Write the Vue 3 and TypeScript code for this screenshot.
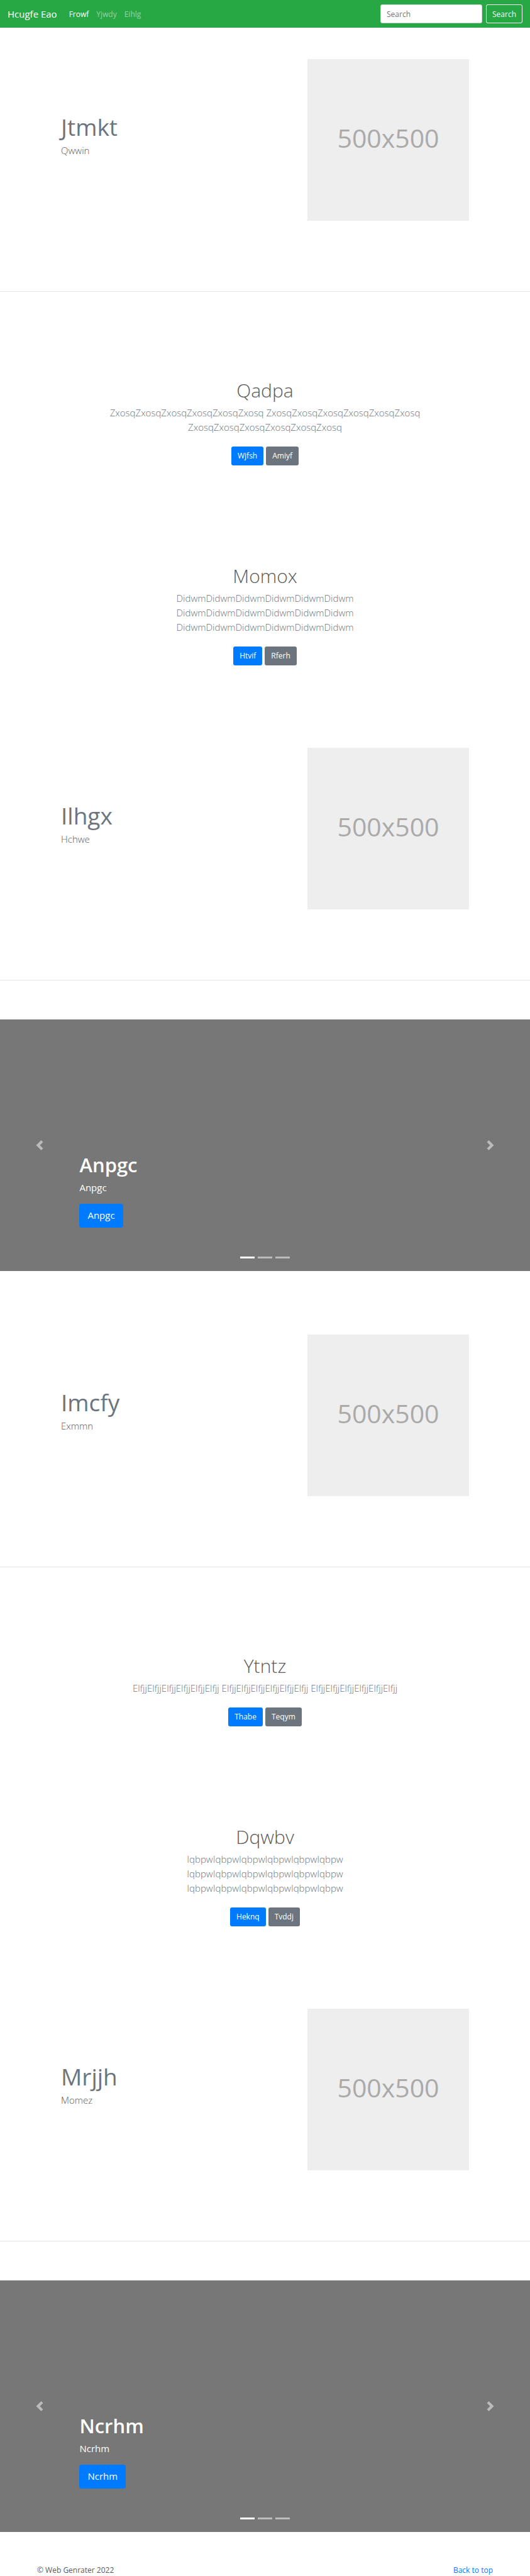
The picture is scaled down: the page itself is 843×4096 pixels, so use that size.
<script setup lang="ts">
interface Feature {
  title: string
  text: string
}

interface Promo {
  title: string
  lines: string
  primary: string
  secondary: string
}

interface Block {
  id: string
  intro: Feature
  promos: Promo[]
  outro: Feature
  slide: string
}

const links: string[] = ['Frowf', 'Yjwdy', 'Eihlg']

const words = (word: string): string => Array(3).fill(word.repeat(6)).join(' ')

const blocks: Block[] = [
  {
    id: 'first',
    intro: { title: 'Jtmkt', text: 'Qwwin' },
    promos: [
      { title: 'Qadpa', lines: words('Zxosq'), primary: 'Wjfsh', secondary: 'Amiyf' },
      { title: 'Momox', lines: words('Didwm'), primary: 'Htvif', secondary: 'Rferh' },
    ],
    outro: { title: 'Ilhgx', text: 'Hchwe' },
    slide: 'Anpgc',
  },
  {
    id: 'second',
    intro: { title: 'Imcfy', text: 'Exmmn' },
    promos: [
      { title: 'Ytntz', lines: words('Elfjj'), primary: 'Thabe', secondary: 'Teqym' },
      { title: 'Dqwbv', lines: words('Iqbpw'), primary: 'Heknq', secondary: 'Tvddj' },
    ],
    outro: { title: 'Mrjjh', text: 'Momez' },
    slide: 'Ncrhm',
  },
]
</script>

<template>
  <div id="top" class="page">
    <header class="navbar">
      <a class="brand" href="#top">Hcugfe Eao</a>
      <nav class="links">
        <a v-for="(link, i) in links" :key="link" href="#top" :class="{ active: i === 0 }">{{ link }}</a>
      </nav>
      <form class="search" @submit.prevent>
        <input type="search" placeholder="Search" aria-label="Search" />
        <button type="submit">Search</button>
      </form>
    </header>

    <main>
      <template v-for="block in blocks" :key="block.id">
        <section class="feature">
          <div class="feature-copy">
            <h2>{{ block.intro.title }}</h2>
            <p>{{ block.intro.text }}</p>
          </div>
          <div class="placeholder"><span>500x500</span></div>
        </section>
        <hr />

        <section v-for="promo in block.promos" :key="promo.title" class="promo">
          <h1>{{ promo.title }}</h1>
          <p>{{ promo.lines }}</p>
          <div class="actions">
            <a class="btn primary" href="#top">{{ promo.primary }}</a>
            <a class="btn secondary" href="#top">{{ promo.secondary }}</a>
          </div>
        </section>

        <section class="feature">
          <div class="feature-copy">
            <h2>{{ block.outro.title }}</h2>
            <p>{{ block.outro.text }}</p>
          </div>
          <div class="placeholder"><span>500x500</span></div>
        </section>
        <hr />

        <section class="carousel">
          <div class="caption">
            <h1>{{ block.slide }}</h1>
            <p>{{ block.slide }}</p>
            <a class="btn primary large" href="#top">{{ block.slide }}</a>
          </div>
          <button class="control prev" type="button" aria-label="Previous">
            <svg viewBox="0 0 8 8"><path d="M5.25 0l-4 4 4 4 1.5-1.5-2.5-2.5 2.5-2.5-1.5-1.5z" /></svg>
          </button>
          <button class="control next" type="button" aria-label="Next">
            <svg viewBox="0 0 8 8"><path d="M2.75 0l-1.5 1.5 2.5 2.5-2.5 2.5 1.5 1.5 4-4-4-4z" /></svg>
          </button>
          <div class="indicators">
            <button
              v-for="n in 3"
              :key="n"
              type="button"
              :class="{ active: n === 1 }"
              :aria-label="`Slide ${n}`"
            ></button>
          </div>
        </section>
      </template>
    </main>

    <footer class="footer">
      <span>© Web Genrater 2022</span>
      <a href="#top">Back to top</a>
    </footer>
  </div>
</template>

<style>
body {
  margin: 0;
  background: #fff;
}
</style>

<style scoped>
.page,
.page * {
  box-sizing: border-box;
}

.page {
  font-family: "Open Sans", "Noto Sans", sans-serif;
  font-size: 12px;
  line-height: 19px;
  color: #5a5a5a;
}

h1,
h2,
p {
  margin: 0;
}

a {
  color: #007bff;
  text-decoration: none;
}

button,
input {
  font: inherit;
}

.navbar {
  display: flex;
  align-items: center;
  height: 44px;
  padding: 0 12px;
  background: #28a745;
}

.navbar a {
  color: #fff;
}

.brand {
  font-size: 15px;
}

.links {
  display: flex;
  flex: 1;
  gap: 12px;
  margin-left: 19px;
}

.links a:not(.active) {
  color: rgba(255, 255, 255, 0.5);
}

.search {
  display: flex;
  gap: 6px;
}

.search input {
  width: 162px;
  height: 30px;
  padding: 0 9px;
  border: 1px solid #ced4da;
  border-radius: 3px;
  background: #fff;
  color: #495057;
}

.search input::placeholder {
  color: #6c757d;
  opacity: 1;
}

.search button {
  height: 30px;
  padding: 0 9px;
  border: 1px solid #f8f9fa;
  border-radius: 3px;
  background: transparent;
  color: #f8f9fa;
}

.feature {
  display: grid;
  grid-template-columns: 1fr 257px;
  max-width: 649px;
  margin: 0 auto;
  padding: 50px 0 112px;
}

.feature-copy {
  padding-top: 88px;
}

.feature h2 {
  font-size: 37px;
  font-weight: 400;
  line-height: 39px;
  color: #6c757d;
}

.feature p {
  margin-top: 7px;
  font-size: 15px;
  font-weight: 300;
  line-height: 23px;
}

.placeholder {
  display: flex;
  align-items: center;
  justify-content: center;
  aspect-ratio: 1;
  padding-bottom: 6px;
  background: #eee;
  color: #aaa;
  font-size: 41px;
}

hr {
  height: 1px;
  margin: 0 0 62px;
  border: 0;
  background: #e6e6e6;
}

.promo {
  max-width: 500px;
  margin: 0 auto;
  padding: 76px 0 81px;
  text-align: center;
}

.promo h1 {
  font-size: 30px;
  font-weight: 300;
  line-height: 37px;
}

.promo p {
  margin-top: 6px;
  font-size: 15px;
  font-weight: 300;
  line-height: 23px;
  color: #6c757d;
}

.actions {
  display: flex;
  justify-content: center;
  gap: 4px;
  margin-top: 19px;
}

.btn {
  padding: 5px 10px 6px;
  border-radius: 3px;
  color: #fff;
}

.primary {
  background: #007bff;
}

.secondary {
  background: #6c757d;
}

.carousel {
  position: relative;
  height: 400px;
  margin-bottom: 51px;
  background: #777;
  color: #fff;
}

.caption {
  position: absolute;
  right: 15%;
  bottom: 69px;
  left: 15%;
}

.caption h1 {
  font-size: 31px;
  font-weight: 600;
  line-height: 37px;
}

.caption p {
  margin: 6px 0 14px;
  font-size: 15px;
  line-height: 23px;
}

.large {
  display: inline-block;
  padding: 7px 13px 8px;
  border-radius: 4px;
  font-size: 15px;
  line-height: 23px;
  vertical-align: top;
}

.control {
  position: absolute;
  top: 0;
  bottom: 0;
  display: flex;
  align-items: center;
  justify-content: center;
  width: 15%;
  padding: 0;
  border: 0;
  background: none;
  opacity: 0.5;
}

.prev {
  left: 0;
}

.next {
  right: 0;
}

.control svg {
  width: 16px;
  height: 16px;
  fill: #fff;
}

.indicators {
  position: absolute;
  right: 15%;
  bottom: 20px;
  left: 15%;
  display: flex;
  justify-content: center;
  gap: 5px;
}

.indicators button {
  width: 23px;
  height: 3px;
  padding: 0;
  border: 0;
  background: #fff;
  opacity: 0.5;
}

.indicators .active {
  opacity: 1;
}

.footer {
  display: flex;
  justify-content: space-between;
  max-width: 725px;
  margin: 0 auto;
}
</style>
